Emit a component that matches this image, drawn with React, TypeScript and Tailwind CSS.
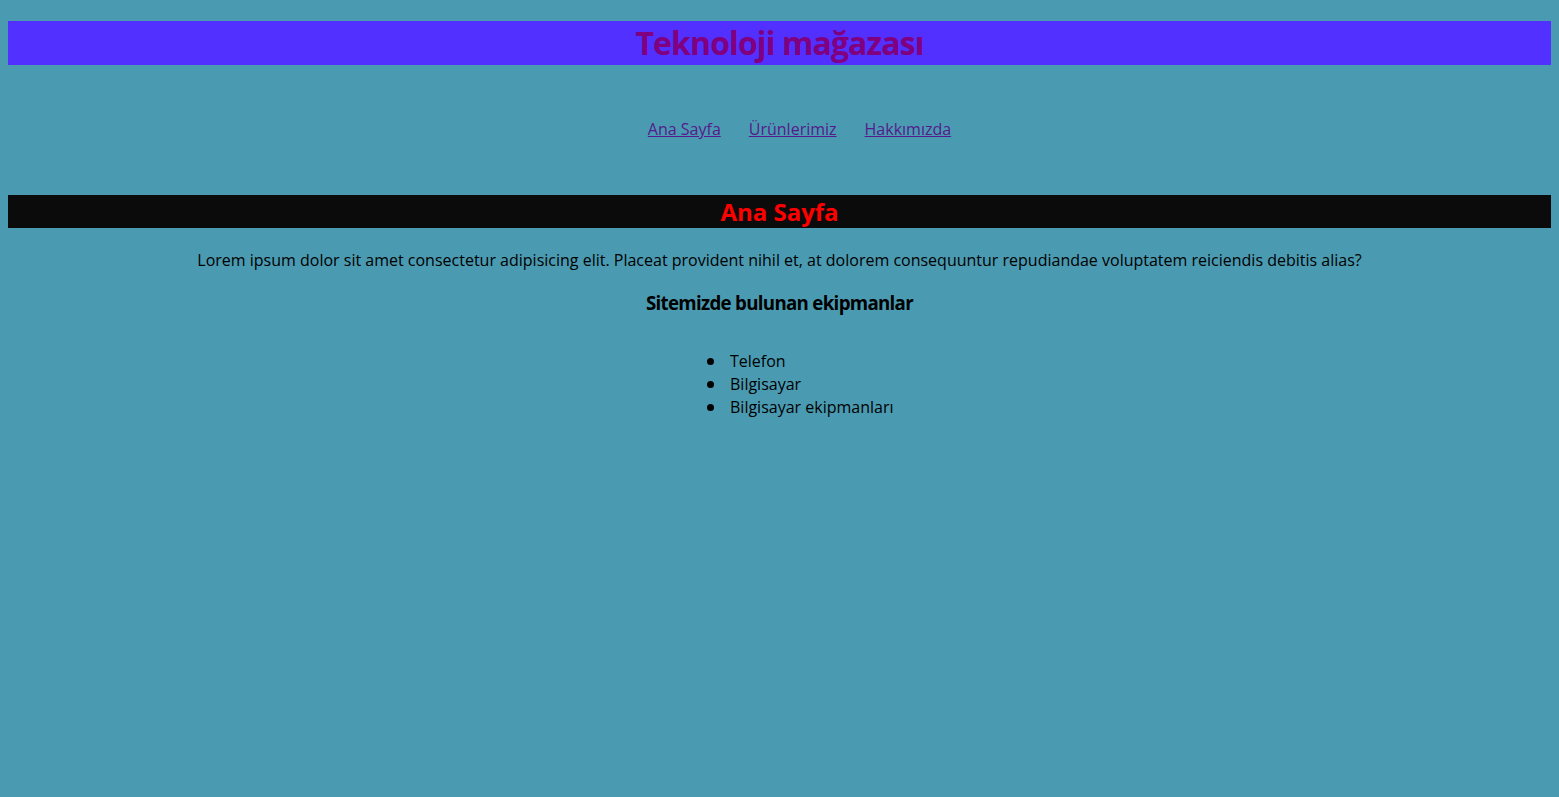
export default function App() {
  const font = { fontFamily: '"Comic Sans MS", "Open Sans", sans-serif' };
  const items = ["Telefon", "Bilgisayar", "Bilgisayar ekipmanları"];
  return (
    <div className="min-h-[797px] w-full bg-[#4a9bb2] px-2 pt-[21px] text-black" style={font}>
      <h1 className="bg-[#5230ff] text-center text-[32px] font-bold leading-[44px] tracking-[-0.9px] text-[#800080]">
        Teknoloji mağazası
      </h1>
      <nav className="flex justify-center gap-[28px] pl-[40px] pt-[53px] text-[16px] leading-[22px]">
        <a href="#" className="text-[#551a8b] underline">Ana Sayfa</a>
        <a href="#" className="text-[#551a8b] underline">Ürünlerimiz</a>
        <a href="#" className="text-[#551a8b] underline">Hakkımızda</a>
      </nav>
      <h2 className="mt-[55px] bg-[#0b0b0b] text-center text-[24px] font-bold leading-[33px] text-[#ff0000]">
        Ana Sayfa
      </h2>
      <p className="mt-[21px] text-center text-[16px] leading-[22px]">
        Lorem ipsum dolor sit amet consectetur adipisicing elit. Placeat provident nihil et, at dolorem consequuntur repudiandae voluptatem reiciendis debitis alias?
      </p>
      <h3 className="mt-[19px] text-center text-[18.72px] font-bold leading-[26px] tracking-[-0.7px]">
        Sitemizde bulunan ekipmanlar
      </h3>
      <ul className="ml-[699px] mt-[34px] flex flex-col text-[16px] leading-[23px]">
        {items.map((t) => (
          <li key={t} className="flex items-center gap-[16px]">
            <span className="h-[7px] w-[7px] rounded-full bg-black" />
            <span>{t}</span>
          </li>
        ))}
      </ul>
    </div>
  );
}
